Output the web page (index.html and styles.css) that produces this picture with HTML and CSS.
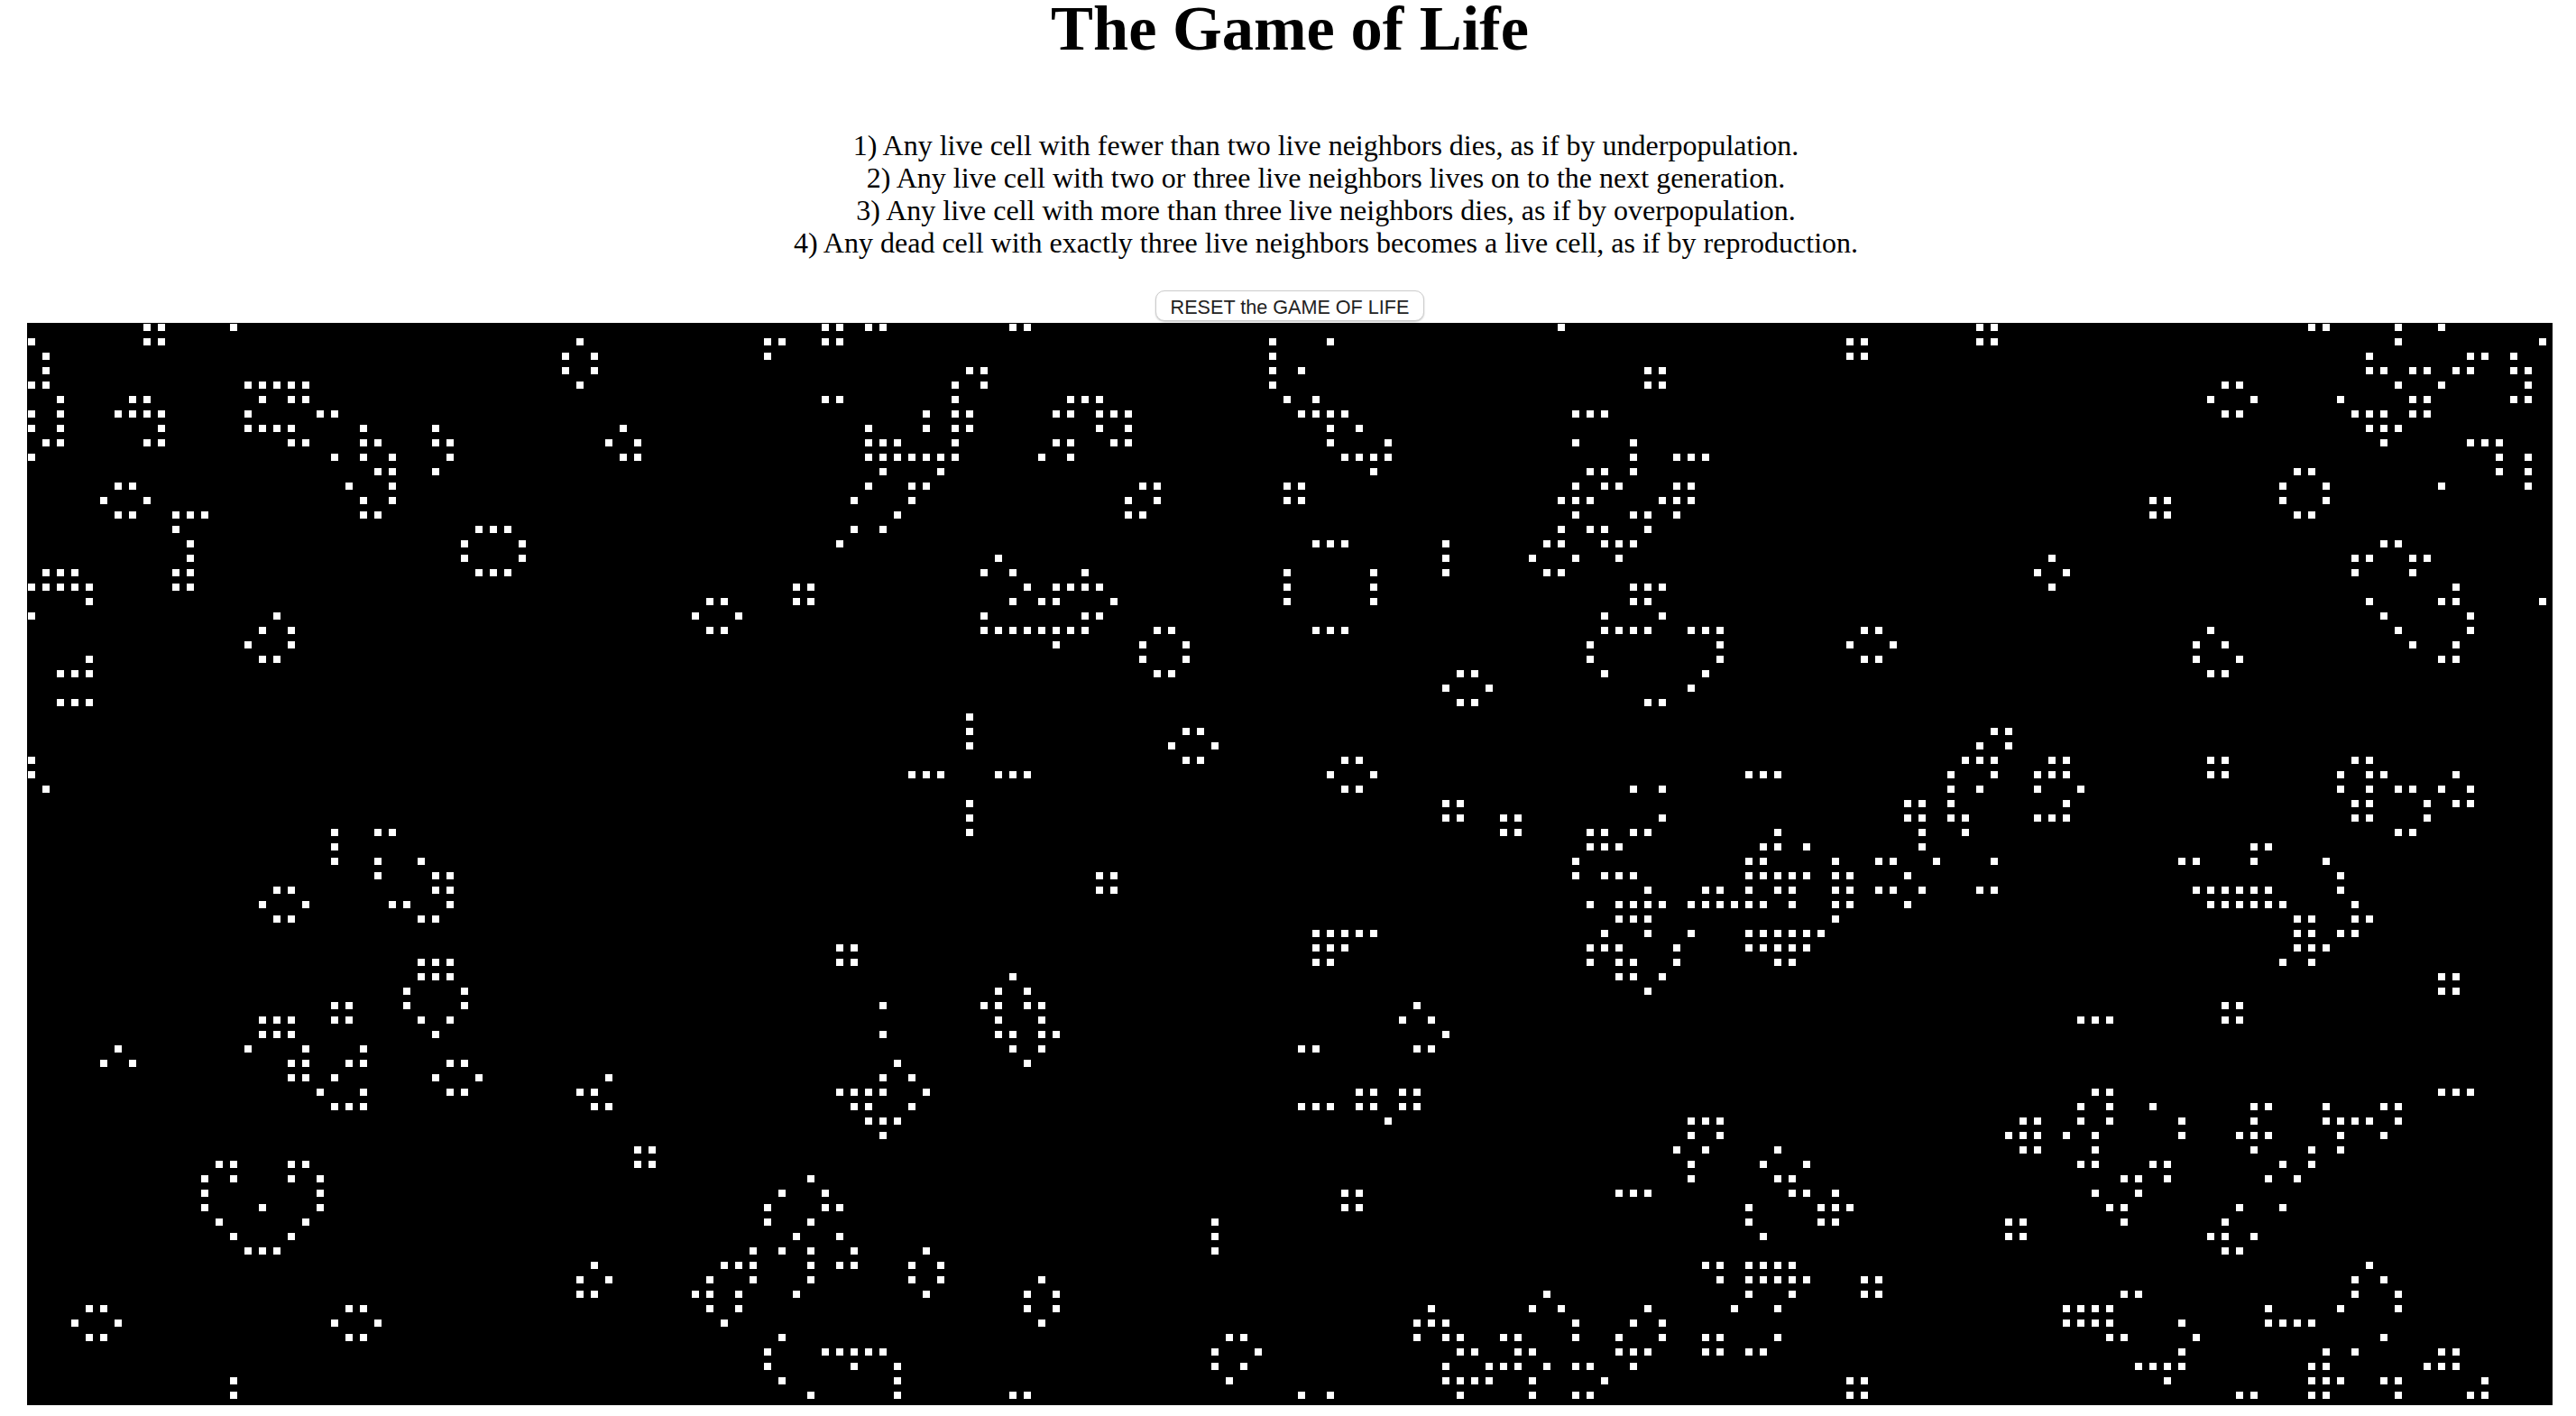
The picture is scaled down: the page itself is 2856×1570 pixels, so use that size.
FILE: index.html
```html
<!DOCTYPE html>
<html>
	<head>
		<meta charset="utf-8">
		<title>The Game of Life</title>
		<meta name="viewport" content="width=device-width, initial-scale=1">
		<link rel="stylesheet" href="styles.css">
	</head>
	<body>
		<div class="page">
			<h1 class="title">The Game of Life</h1>
			<ul class="rules">
				<li>1) Any live cell with fewer than two live neighbors dies, as if by underpopulation.</li>
				<li>2) Any live cell with two or three live neighbors lives on to the next generation.</li>
				<li>3) Any live cell with more than three live neighbors dies, as if by overpopulation.</li>
				<li>4) Any dead cell with exactly three live neighbors becomes a live cell, as if by reproduction.</li>
			</ul>
			<button id="resetBtn" class="reset" type="button">RESET the GAME OF LIFE</button>
			<canvas id="board" class="board" width="2800" height="1200"></canvas>
		</div>
		<script src="game.js"></script>
	</body>
</html>
```

FILE: styles.css
```css
body{
	margin: 0;
	background: #fff;
	color: #000;
	font-family: "Liberation Serif", "Times New Roman", serif;
}
.page{
	width: 2800px;
	margin-left: 30px;
	text-align: center;
}
.title{
	margin: -1px 0 80px;
	font-size: 70.4px;
	line-height: 64px;
	font-weight: bold;
}
.rules{
	margin: 0 0 35px;
	padding: 0 0 0 80px;
	list-style: none;
	font-size: 32px;
	line-height: 36px;
}
.reset{
	display: block;
	width: 298px;
	height: 34px;
	margin: 0 auto 2px;
	padding: 3px 0 0;
	background: #fff;
	color: #222;
	border: 1px solid #ccc;
	border-radius: 10px;
	box-shadow: 0 1px 2px rgba(0,0,0,0.2);
	font-family: "Liberation Sans", Arial, sans-serif;
	font-size: 21.6px;
}
.board{
	display: block;
	width: 2800px;
	height: 1200px;
	background: #000;
}
```

FILE: game.js
```js
// live cells of the board, one list of columns per row
var CELL = 16;
var DOT = 8;
var start = [
	[8,9,14,55,56,58,59,68,69,106,135,136,158,159,164,167],
	[0,8,9,38,51,52,55,56,86,90,126,127,135,136,164,174],
	[1,37,39,51,86,126,127,162,169,170,172],
	[1,37,39,65,66,86,88,112,113,162,163,165,166,168,169,172,173],
	[0,1,15,16,17,18,19,38,64,66,86,112,113,152,153,164,167,173],
	[2,7,8,16,18,19,55,56,64,72,73,74,87,89,151,154,160,165,166,172,173],
	[0,2,6,7,8,9,15,20,21,62,64,65,71,72,74,75,76,88,89,90,91,107,108,109,152,153,161,162,163,165,166],
	[0,2,9,15,16,17,18,23,28,41,58,62,64,65,74,76,90,92,162,163,164],
	[1,2,8,9,18,19,23,24,28,29,40,42,58,59,60,64,71,72,75,76,90,94,107,111,163,169,170,171],
	[0,21,23,25,29,41,42,58,59,60,61,62,63,64,70,72,91,92,93,94,111,114,115,116,171,173],
	[24,25,28,59,63,93,108,109,111,157,158,171,173],
	[6,7,22,25,58,61,62,77,78,87,88,107,109,110,114,115,156,159,167,173],
	[5,8,23,25,57,61,76,78,87,88,106,107,108,113,114,115,147,148,156,159],
	[6,7,10,11,12,23,24,60,76,77,107,111,112,114,147,148,157,158],
	[10,31,32,33,57,59,106,108,109,112],
	[11,30,34,56,89,90,91,98,105,106,109,110,111,163,164],
	[11,30,34,67,98,104,107,110,140,161,162,165,166],
	[1,2,3,10,11,31,32,33,66,68,73,87,93,98,105,106,139,141,161,165],
	[0,1,2,3,4,10,11,53,54,69,71,72,73,74,87,93,111,112,113,140,168],
	[4,47,48,53,54,68,70,71,75,87,93,111,112,162,167,168,174],
	[0,17,46,49,66,73,74,109,113,163,169],
	[16,18,47,48,66,67,68,69,70,71,72,73,78,79,89,90,91,109,110,111,112,115,116,117,127,128,151,164,169],
	[15,18,71,77,80,108,117,126,129,150,152,165,168],
	[4,16,17,77,80,108,117,127,128,150,153,167,168],
	[2,3,4,78,79,99,100,109,116,151,152],
	[98,101,115],
	[2,3,4,99,100,112,113],
	[65],
	[65,80,81,136,137],
	[65,79,82,135,137],
	[0,80,81,91,92,134,135,136,140,141,151,152,161,162],
	[0,61,62,63,67,68,69,90,93,119,120,121,133,136,139,140,141,151,152,160,162,163,168],
	[1,91,92,111,113,133,135,139,142,160,162,164,165,167,169],
	[65,98,99,130,131,133,141,161,162,166,168,169],
	[65,98,99,102,103,113,130,131,133,134,139,140,141,161,162,166],
	[21,24,25,65,102,103,108,109,111,112,121,131,134,164,165],
	[21,108,109,110,120,121,123,131,154,155],
	[21,24,27,107,119,120,125,128,129,132,136,149,150,154,159],
	[24,28,29,74,75,107,109,110,111,119,120,121,122,123,125,126,130,160],
	[17,18,28,29,74,75,112,116,117,119,121,122,125,126,128,129,131,135,136,150,151,152,153,154,155,160],
	[16,19,25,26,29,108,110,111,112,113,115,116,117,118,119,120,122,125,126,130,151,152,153,154,155,156,161],
	[17,18,27,28,110,111,112,125,157,158,161,162],
	[89,90,91,92,93,109,112,115,119,120,121,122,123,124,157,158,160,161],
	[56,57,89,90,91,108,109,110,114,119,120,121,122,123,157,158,159],
	[27,28,29,56,57,89,90,108,110,111,114,121,122,156,158],
	[27,28,29,68,110,111,113,167,168],
	[26,30,67,69,112,167,168],
	[21,22,26,30,59,66,67,69,70,96,152,153],
	[16,17,18,21,22,27,29,67,70,95,97,142,143,144,152,153],
	[16,17,18,28,59,67,68,70,71,98],
	[6,15,19,23,68,70,88,89,96,97],
	[5,7,18,19,22,23,29,30,60,69],
	[18,19,21,28,31,40,59,61],
	[20,23,29,30,38,39,56,57,58,59,62,92,93,95,96,143,144,167,168,169],
	[21,22,23,39,40,57,58,61,88,89,90,92,93,95,96,142,144,147,154,155,159,163,164],
	[58,59,60,94,115,116,117,138,139,142,144,149,154,159,160,161,162,164],
	[59,115,117,137,138,139,141,143,149,153,154,155,160,163],
	[42,43,114,116,121,138,139,143,154,158,160],
	[13,14,18,19,42,43,115,120,123,142,143,147,148,156,158],
	[12,14,18,20,54,115,121,122,145,146,148,155,157],
	[12,20,52,55,91,92,110,111,112,122,123,125,143,146],
	[12,16,20,51,55,56,91,92,119,124,125,126,144,145,153,156],
	[13,19,51,54,82,119,124,125,137,138,145,152],
	[14,18,53,56,82,120,137,138,151,152,154],
	[15,16,17,50,52,54,57,62,82,152,153],
	[39,48,49,50,54,56,57,61,63,116,117,119,120,121,122,162],
	[38,40,47,50,54,61,63,70,117,119,120,121,122,123,127,128,161,163],
	[38,39,46,47,49,53,62,69,71,105,119,122,127,128,145,146,161,164],
	[4,5,22,23,47,49,69,71,97,104,106,112,118,121,141,142,143,144,155,160,164],
	[3,6,21,24,48,70,96,97,98,107,111,113,141,142,143,144,149,155,156,157,158],
	[4,5,22,23,52,83,84,96,98,99,102,103,107,110,113,116,117,121,144,145,150,163],
	[51,55,56,57,58,59,82,85,99,100,103,104,110,111,112,116,117,119,120,149,159,161,167,168],
	[51,57,60,82,84,98,101,102,103,105,107,108,111,146,147,148,149,158,159,166,167,168],
	[14,52,60,83,98,99,100,101,104,109,126,127,148,158,159,160,163,164,170],
	[14,54,60,68,69,88,90,99,104,107,108,126,127,153,154,158,159,164,169,170]
];

function draw(rows){
	var ctx = document.getElementById('board').getContext('2d');
	ctx.fillStyle = '#000';
	ctx.fillRect(0, 0, 2800, 1200);
	ctx.fillStyle = '#fff';
	rows.forEach(function(cols, r){
		cols.forEach(function(c){
			ctx.fillRect(c * CELL + 1, r * CELL + 1, DOT, DOT);
		});
	});
}

document.getElementById('resetBtn').addEventListener('click', function(){
	draw(start);
});
draw(start);
```
